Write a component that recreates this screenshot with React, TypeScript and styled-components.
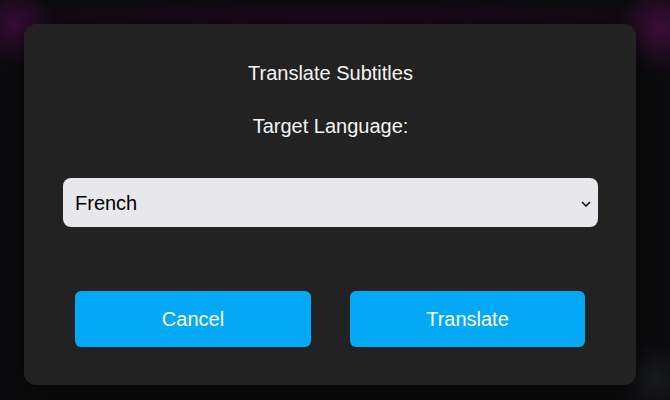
import React, { useState } from 'react';
import styled, { createGlobalStyle } from 'styled-components';

const GlobalStyle = createGlobalStyle`
  html, body {
    margin: 0;
    padding: 0;
    height: 100%;
  }

  body {
    background-color: #0b0b0d;
    background-image:
      radial-gradient(circle at 16px 26px, rgba(70, 12, 68, 0.75) 0, rgba(70, 12, 68, 0) 42px),
      radial-gradient(circle at 660px 28px, rgba(75, 14, 72, 0.75) 0, rgba(75, 14, 72, 0) 46px),
      radial-gradient(ellipse 380px 20px at 335px 18px, rgba(45, 6, 42, 0.55) 0, rgba(45, 6, 42, 0) 100%),
      radial-gradient(circle at 655px 378px, rgba(40, 42, 46, 0.5) 0, rgba(40, 42, 46, 0) 36px);
    font-family: 'Liberation Sans', Arial, sans-serif;
    overflow: hidden;
  }
`;

const Page = styled.div`
  padding: 24px 34px 15px 24px;
`;

const Dialog = styled.div`
  display: flex;
  flex-direction: column;
  box-sizing: border-box;
  width: 612px;
  padding: 38px 38px 38px 39px;
  background: #222222;
  border-radius: 12px;
  box-shadow: 0 4px 24px rgba(0, 0, 0, 0.6);
`;

const Title = styled.h2`
  margin: 0;
  font-size: 20px;
  font-weight: normal;
  line-height: 23px;
  color: #f4f4f4;
  text-align: center;
`;

const Label = styled.label`
  display: block;
  margin-top: 30px;
  font-size: 20px;
  line-height: 23px;
  color: #f4f4f4;
  text-align: center;
`;

const SelectWrap = styled.div`
  position: relative;
  margin-top: 40px;
`;

const Select = styled.select`
  display: block;
  box-sizing: border-box;
  width: 100%;
  height: 49px;
  padding: 0 32px 0 12px;
  border: none;
  border-radius: 8px;
  background: #e8e7ec;
  color: #000;
  font-family: 'Liberation Sans', Arial, sans-serif;
  font-size: 20px;
  appearance: none;
  outline: none;
`;

const Chevron = styled.svg`
  position: absolute;
  right: 7px;
  top: 50%;
  width: 10px;
  height: 6px;
  margin-top: -2px;
  pointer-events: none;
`;

const Actions = styled.div`
  display: grid;
  grid-template-columns: 236px 235px;
  column-gap: 39px;
  margin-top: 64px;
  padding: 0 13px 0 12px;
`;

const Button = styled.button`
  height: 56px;
  border: none;
  border-radius: 6px;
  background: #03a9f4;
  color: #ffffff;
  font-family: 'Liberation Sans', Arial, sans-serif;
  font-size: 20px;
  cursor: pointer;
`;

const languages = ['French', 'Spanish', 'German', 'Italian', 'Portuguese', 'Japanese'];

const App: React.FC = () => {
  const [language, setLanguage] = useState('French');

  return (
    <Page>
      <GlobalStyle />
      <Dialog>
        <Title>Translate Subtitles</Title>
        <Label htmlFor="target-language">Target Language:</Label>
        <SelectWrap>
          <Select
            id="target-language"
            value={language}
            onChange={(e) => setLanguage(e.target.value)}
          >
            {languages.map((lang) => (
              <option key={lang} value={lang}>
                {lang}
              </option>
            ))}
          </Select>
          <Chevron viewBox="0 0 10 6">
            <path d="M1 1 L5 5 L9 1" fill="none" stroke="#111" strokeWidth="1.6" />
          </Chevron>
        </SelectWrap>
        <Actions>
          <Button>Cancel</Button>
          <Button>Translate</Button>
        </Actions>
      </Dialog>
    </Page>
  );
};

export default App;
